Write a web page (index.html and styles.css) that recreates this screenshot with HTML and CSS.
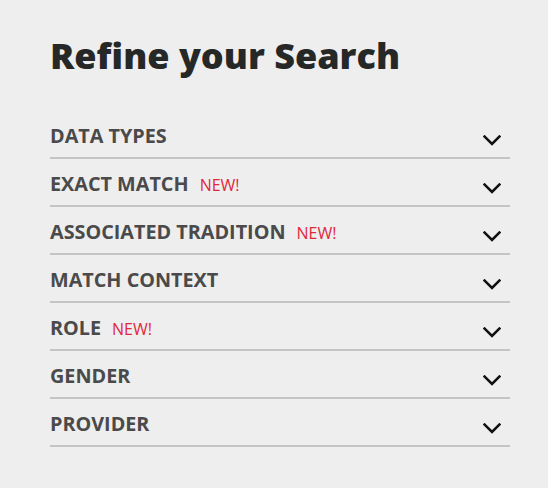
FILE: index.html
```html
<!DOCTYPE html>
<html>
<head>
<meta charset="utf-8">
<link rel="stylesheet" href="styles.css">
</head>
<body>
<div class="panel">
  <h1 class="title">Refine your Search</h1>
  <ul class="filters">
    <li class="filter"><span class="label">DATA TYPES</span><svg class="chev" viewBox="0 0 18 11"><path d="M1.6 1.6L9 9l7.4-7.4"/></svg></li>
    <li class="filter"><span class="label">EXACT MATCH</span><span class="new">NEW!</span><svg class="chev" viewBox="0 0 18 11"><path d="M1.6 1.6L9 9l7.4-7.4"/></svg></li>
    <li class="filter"><span class="label">ASSOCIATED TRADITION</span><span class="new">NEW!</span><svg class="chev" viewBox="0 0 18 11"><path d="M1.6 1.6L9 9l7.4-7.4"/></svg></li>
    <li class="filter"><span class="label">MATCH CONTEXT</span><svg class="chev" viewBox="0 0 18 11"><path d="M1.6 1.6L9 9l7.4-7.4"/></svg></li>
    <li class="filter"><span class="label">ROLE</span><span class="new">NEW!</span><svg class="chev" viewBox="0 0 18 11"><path d="M1.6 1.6L9 9l7.4-7.4"/></svg></li>
    <li class="filter"><span class="label">GENDER</span><svg class="chev" viewBox="0 0 18 11"><path d="M1.6 1.6L9 9l7.4-7.4"/></svg></li>
    <li class="filter"><span class="label">PROVIDER</span><svg class="chev" viewBox="0 0 18 11"><path d="M1.6 1.6L9 9l7.4-7.4"/></svg></li>
  </ul>
</div>
</body>
</html>
```
FILE: styles.css
```css
html, body {
  margin: 0;
  padding: 0;
  background: #eeeeee;
}
body {
  font-family: "Open Sans", sans-serif;
}
.panel {
  width: 460px;
  padding: 36px 0 0 50px;
}
.title {
  margin: 0 0 35px 0;
  font-size: 36px;
  line-height: 40px;
  font-weight: 800;
  color: #262828;
}
.filters {
  list-style: none;
  margin: 0;
  padding: 0;
}
.filter {
  display: flex;
  align-items: baseline;
  box-sizing: border-box;
  height: 48px;
  padding-top: 13px;
  border-bottom: 2px solid #c4c4c4;
}
.label {
  font-size: 19.8px;
  font-weight: 700;
  color: #4a4a4a;
  line-height: 24px;
}
.new {
  font-size: 16px;
  color: #e0283d;
  margin-left: 11px;
  line-height: 24px;
}
.chev {
  align-self: flex-start;
  width: 18px;
  height: 11px;
  margin-left: auto;
  margin-right: 9px;
  margin-top: 10.5px;
  fill: none;
  stroke: #111;
  stroke-width: 2.6;
  stroke-linecap: square;
}
```
